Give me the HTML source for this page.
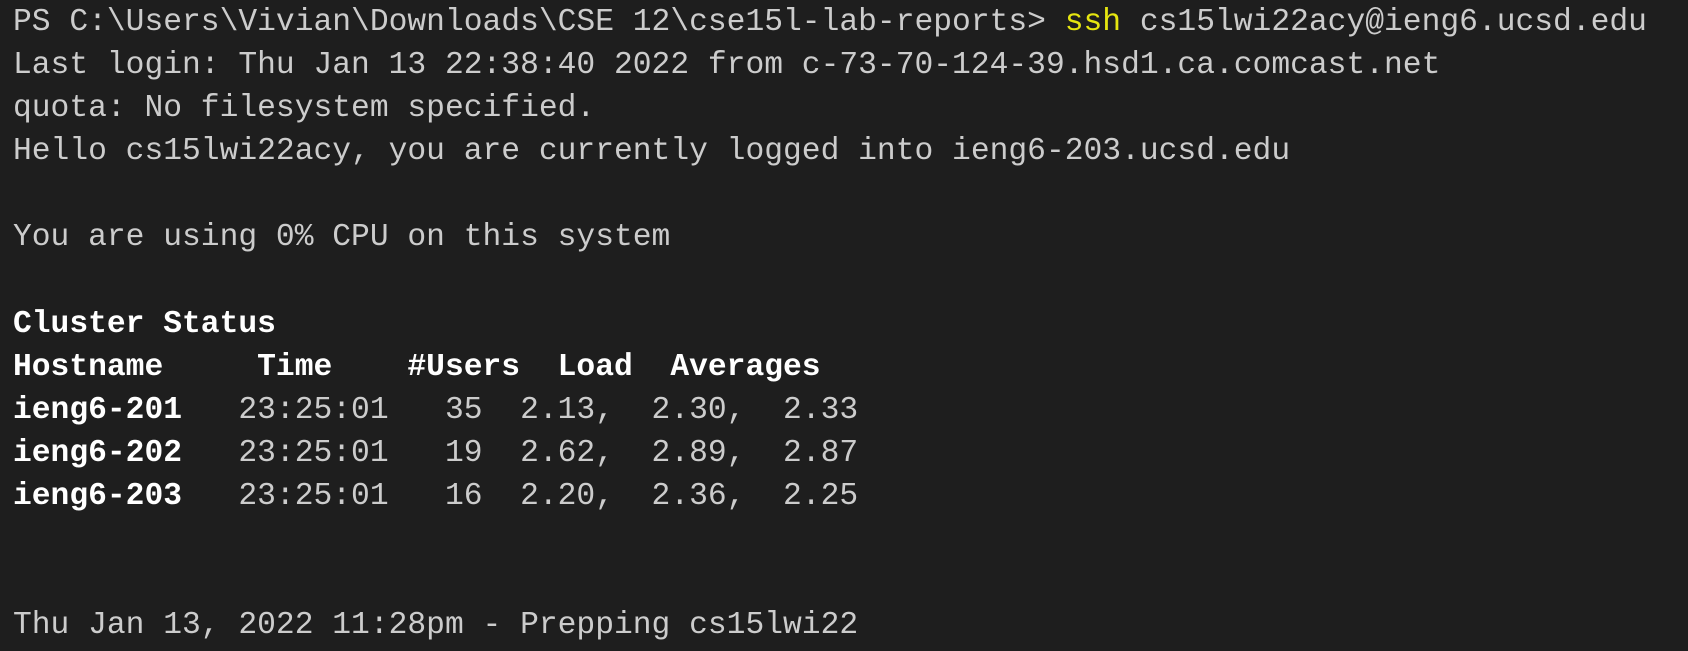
<!DOCTYPE html>
<html><head><meta charset="utf-8"><style>
html,body{margin:0;padding:0;background:#1e1e1e;width:1688px;height:651px;overflow:hidden}
pre{margin:0;padding:1px 0 0 13px;font-family:"Liberation Mono",monospace;font-size:31.3px;line-height:43.1px;color:#cccccc;white-space:pre}
b{color:#ffffff;font-weight:bold}
.y{color:#e5e510}
</style></head><body><pre>PS C:\Users\Vivian\Downloads\CSE 12\cse15l-lab-reports&gt; <span class="y">ssh</span> cs15lwi22acy@ieng6.ucsd.edu
Last login: Thu Jan 13 22:38:40 2022 from c-73-70-124-39.hsd1.ca.comcast.net
quota: No filesystem specified.
Hello cs15lwi22acy, you are currently logged into ieng6-203.ucsd.edu

You are using 0% CPU on this system

<b>Cluster Status</b>
<b>Hostname     Time    #Users  Load  Averages</b>
<b>ieng6-201</b>   23:25:01   35  2.13,  2.30,  2.33
<b>ieng6-202</b>   23:25:01   19  2.62,  2.89,  2.87
<b>ieng6-203</b>   23:25:01   16  2.20,  2.36,  2.25


Thu Jan 13, 2022 11:28pm - Prepping cs15lwi22</pre></body></html>
